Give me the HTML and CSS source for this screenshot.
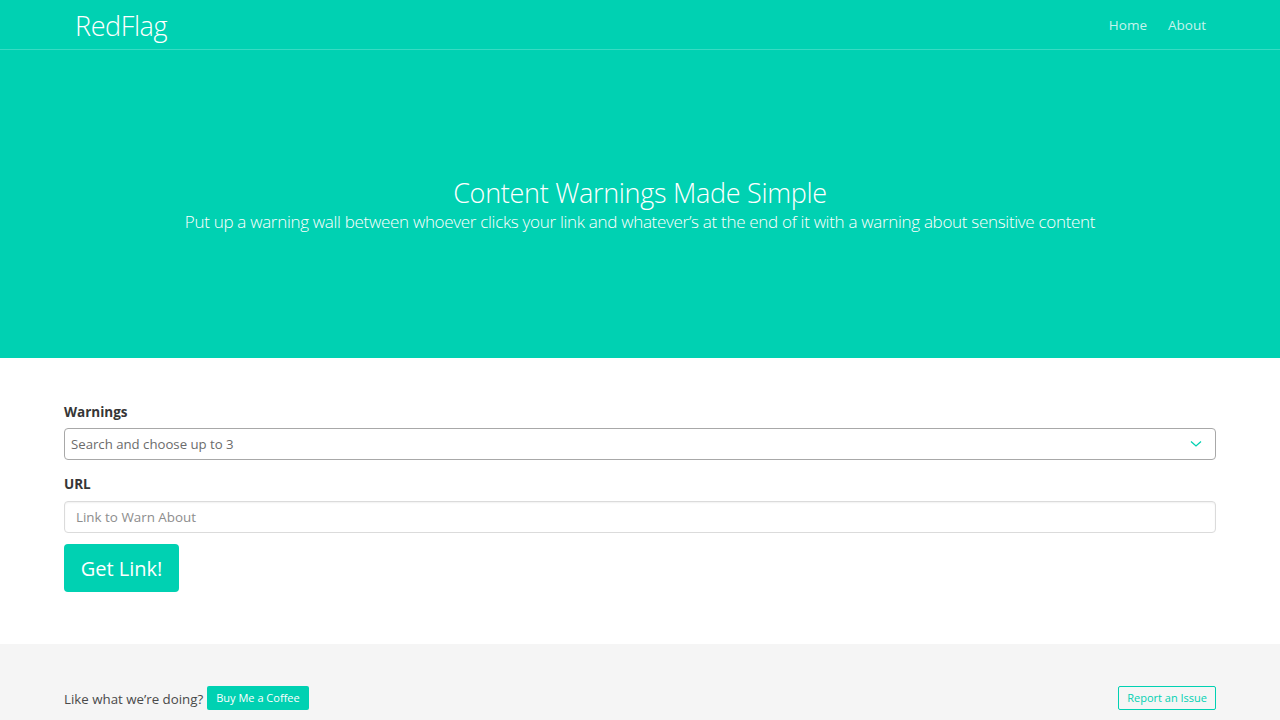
FILE: index.html
```html
<!DOCTYPE html>
<html lang="en">
<head>
<meta charset="utf-8">
<title>RedFlag</title>
<link rel="stylesheet" href="styles.css">
</head>
<body>
<header class="topbar">
  <nav class="nav">
    <a class="brand" href="#">RedFlag</a>
    <div class="nav-links">
      <a class="nav-link" href="#">Home</a>
      <a class="nav-link" href="#">About</a>
    </div>
  </nav>
</header>
<section class="hero">
  <h1 class="hero-title">Content Warnings Made Simple</h1>
  <p class="hero-sub">Put up a warning wall between whoever clicks your link and whatever’s at the end of it with a warning about sensitive content</p>
</section>
<main class="form-section">
  <div class="field">
    <label class="label">Warnings</label>
    <div class="select">
      <span class="select-ph">Search and choose up to 3</span>
      <svg class="chev" width="12" height="8" viewBox="0 0 12 8"><path d="M1 1.5 L6 6 L11 1.5" fill="none" stroke="#00d1b2" stroke-width="1.3"/></svg>
    </div>
  </div>
  <div class="field">
    <label class="label">URL</label>
    <input class="input" type="text" placeholder="Link to Warn About">
  </div>
  <button class="btn-big">Get Link!</button>
</main>
<footer class="footer">
  <div class="footer-left">
    <span class="footer-text">Like what we’re doing?</span>
    <a class="btn-small" href="#">Buy Me a Coffee</a>
  </div>
  <a class="btn-outline" href="#">Report an Issue</a>
</footer>
</body>
</html>
```
FILE: styles.css
```css
* { box-sizing: border-box; }
html, body { margin: 0; padding: 0; }
body {
  font-family: "Open Sans", "Noto Sans", sans-serif;
  background: #fff;
  color: #4a4a4a;
  height: 720px;
  overflow: hidden;
}
a { text-decoration: none; }

.topbar {
  background: #00d1b2;
  border-bottom: 1px solid rgba(255,255,255,0.22);
  height: 50px;
}
.nav {
  height: 49px;
  display: flex;
  align-items: center;
  justify-content: space-between;
  padding: 0 74px 0 75px;
}
.brand {
  color: #fff;
  font-size: 27px;
  font-weight: 300;
  letter-spacing: -0.4px;
  margin-top: 2px;
}
.nav-links { display: flex; gap: 21px; }
.nav-link {
  color: rgba(255,255,255,0.78);
  font-size: 13.5px;
  font-weight: 400;
}

.hero {
  background: #00d1b2;
  height: 308px;
  display: flex;
  flex-direction: column;
  align-items: center;
  justify-content: center;
  color: #fff;
  text-align: center;
  padding-top: 3px;
}
.hero-title {
  margin: 0;
  font-size: 27px;
  font-weight: 300;
  line-height: 32px;
  letter-spacing: -0.3px;
}
.hero-sub {
  margin: 0;
  font-size: 17px;
  font-weight: 300;
  line-height: 26px;
  letter-spacing: -0.3px;
}

.form-section {
  padding: 45px 64px 52px;
}
.field { margin-bottom: 15px; }
.field + .field { margin-bottom: 11px; }
.label {
  display: block;
  font-size: 13.5px;
  font-weight: 700;
  color: #363636;
  margin-bottom: 7px;
}
.field + .field .label { margin-bottom: 8px; }
.select {
  height: 32px;
  border: 1px solid #a8a8a8;
  border-radius: 4px;
  display: flex;
  align-items: center;
  justify-content: space-between;
  padding: 0 13px 0 6px;
}
.select-ph { font-size: 13.2px; color: #6b6b6b; }
.input {
  display: block;
  width: 100%;
  height: 32px;
  border: 1px solid #dbdbdb;
  border-radius: 4px;
  padding: 0 11px;
  font-family: inherit;
  font-size: 13.4px;
  color: #363636;
  box-shadow: inset 0 1px 2px rgba(10,10,10,0.06);
}
.input::placeholder { color: #8d8d8d; }
.btn-big {
  display: block;
  height: 48px;
  width: 115px;
  background: #00d1b2;
  border: 0;
  border-radius: 4px;
  color: #fff;
  font-family: inherit;
  font-size: 20px;
  font-weight: 400;
  padding: 0;
}

.footer {
  background: #f5f5f5;
  height: 76px;
  display: flex;
  align-items: flex-end;
  justify-content: space-between;
  padding: 0 64px 10px;
}
.footer-left { display: flex; align-items: center; gap: 4px; }
.footer-text { font-size: 13.3px; color: #4a4a4a; margin-top: 2px; }
.btn-small {
  background: #00d1b2;
  color: #fff;
  font-size: 11px;
  height: 24px;
  line-height: 24px;
  padding: 0 9px;
  border-radius: 2px;
}
.btn-outline {
  color: #00d1b2;
  border: 1px solid #00d1b2;
  font-size: 11px;
  height: 24px;
  line-height: 22px;
  padding: 0 8px;
  border-radius: 2px;
}
```
